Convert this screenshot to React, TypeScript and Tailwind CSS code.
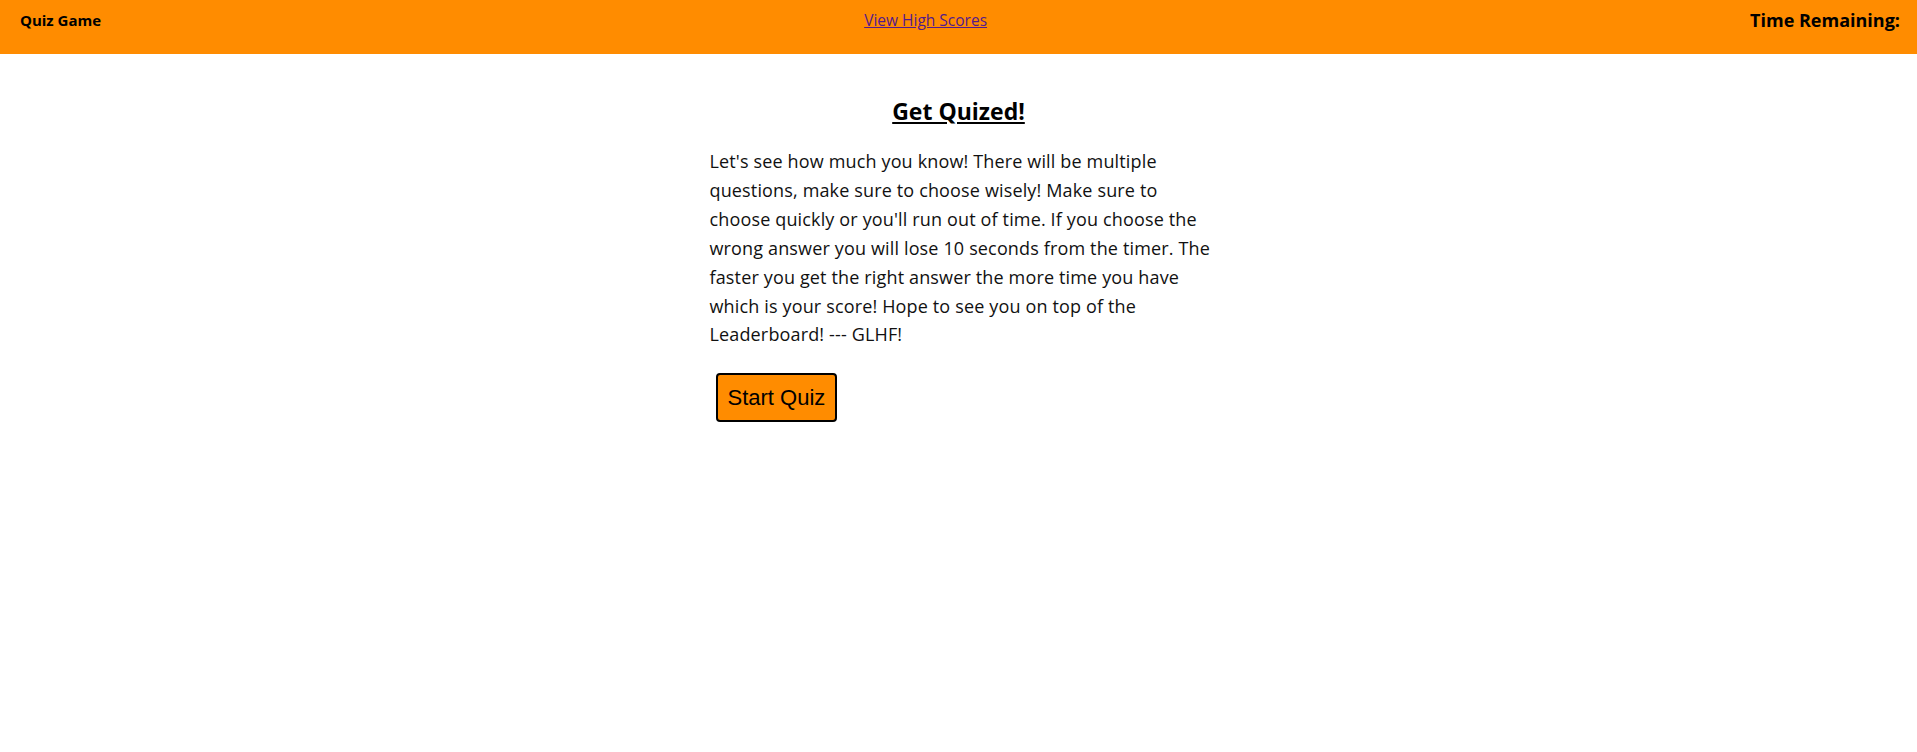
const lines = [
  "Let's see how much you know! There will be multiple",
  'questions, make sure to choose wisely! Make sure to',
  "choose quickly or you'll run out of time. If you choose the",
  'wrong answer you will lose 10 seconds from the timer. The',
  'faster you get the right answer the more time you have',
  'which is your score! Hope to see you on top of the',
  'Leaderboard! --- GLHF!',
];

export default function App() {
  return (
    <div className="min-h-screen bg-white text-black font-['Open_Sans',sans-serif]">
      <header className="flex h-[54px] items-start justify-between bg-[#ff8c00] pl-[20px] pr-[17px] pt-[8px]">
        <div className="text-[15px] font-bold leading-[24px]">Quiz Game</div>
        <a href="#" className="text-[15.5px] leading-[24px] text-[#551a8b] underline">
          View High Scores
        </a>
        <div className="text-[18px] font-bold leading-[24px]">Time Remaining:</div>
      </header>

      <main className="mx-auto mt-[41px] w-[500px]">
        <h1 className="text-center text-[23px] font-bold leading-[32px] underline">Get Quized!</h1>
        <p className="mt-[20px] whitespace-nowrap pl-[1px] text-[18px] leading-[28.9px] tracking-[0.15px] text-[#111]">
          {lines.map((line, i) => (
            <span key={i}>
              {line}
              {i < lines.length - 1 && <br />}
            </span>
          ))}
        </p>
        <button className="ml-[7px] mt-[24px] h-[49px] rounded-[4px] border-2 border-black bg-[#ff8c00] px-[10px] font-['Liberation_Sans',Arial,sans-serif] text-[22px] text-black">
          Start Quiz
        </button>
      </main>
    </div>
  );
}
